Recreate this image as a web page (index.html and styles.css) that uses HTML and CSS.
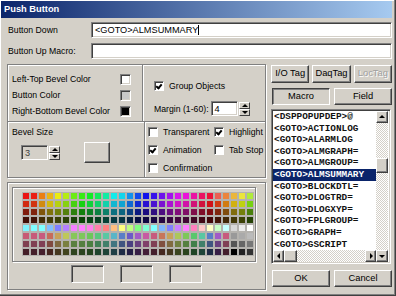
FILE: index.html
```html
<!DOCTYPE html>
<html lang="en">
<head>
    <meta charset="UTF-8">
    <title>Push Button</title>
    <link rel="stylesheet" href="styles.css">
</head>
<body>
    <div class="window">
        <div class="titlebar">Push Button</div>
        <div class="content">
            <div class="field-row">
                <label>Button Down</label>
                <div class="textbox">&lt;GOTO&gt;ALMSUMMARY<span class="caret"></span></div>
            </div>
            <div class="field-row">
                <label>Button Up Macro:</label>
                <div class="textbox"></div>
            </div>

            <div class="main">
                <div class="left">
                    <div class="group props">
                        <div class="props-top">
                            <div class="bevel-colors">
                                <div class="color-row"><span>Left-Top Bevel Color</span><span class="swatch white"></span></div>
                                <div class="color-row"><span>Button Color</span><span class="swatch gray"></span></div>
                                <div class="color-row"><span>Right-Bottom Bevel Color</span><span class="swatch black"></span></div>
                            </div>
                            <div class="grouping">
                                <div class="check-row"><span class="check on"></span>Group Objects</div>
                                <div class="margin-row">
                                    <span>Margin (1-60):</span>
                                    <div class="spinner">
                                        <div class="textbox small">4</div>
                                        <div class="spin"><span class="up"></span><span class="down"></span></div>
                                    </div>
                                </div>
                            </div>
                        </div>
                        <div class="props-bottom">
                            <div class="bevel-size">
                                <div class="caption">Bevel Size</div>
                                <div class="bevel-controls">
                                    <div class="spinner">
                                        <div class="textbox small disabled">3</div>
                                        <div class="spin"><span class="up"></span><span class="down"></span></div>
                                    </div>
                                    <div class="btn preview"></div>
                                </div>
                            </div>
                            <div class="options">
                                <div class="check-row"><span class="check"></span>Transparent</div>
                                <div class="check-row"><span class="check on"></span>Highlight</div>
                                <div class="check-row"><span class="check on"></span>Animation</div>
                                <div class="check-row"><span class="check"></span>Tab Stop</div>
                                <div class="check-row"><span class="check"></span>Confirmation</div>
                            </div>
                        </div>
                    </div>

                    <div class="group palette-group">
                        <div class="palette-panel">
                            <div class="palette" id="palette"></div>
                        </div>
                        <div class="wells">
                            <div class="well"></div>
                            <div class="well"></div>
                            <div class="well"></div>
                        </div>
                    </div>
                </div>

                <div class="right">
                    <div class="tag-buttons">
                        <div class="btn">I/O Tag</div>
                        <div class="btn">DaqTag</div>
                        <div class="btn disabled">LocTag</div>
                    </div>
                    <div class="mode-buttons">
                        <div class="btn pressed">Macro</div>
                        <div class="btn">Field</div>
                    </div>
                    <div class="listbox">
                        <div class="list-main">
                            <ul class="items">
                                <li>&lt;DSPPOPUPDEP&gt;@</li>
                                <li>&lt;GOTO&gt;ACTIONLOG</li>
                                <li>&lt;GOTO&gt;ALARMLOG</li>
                                <li>&lt;GOTO&gt;ALMGRAPH=</li>
                                <li>&lt;GOTO&gt;ALMGROUP=</li>
                                <li class="selected">&lt;GOTO&gt;ALMSUMMARY</li>
                                <li>&lt;GOTO&gt;BLOCKDTL=</li>
                                <li>&lt;GOTO&gt;DLOGTRD=</li>
                                <li>&lt;GOTO&gt;DLOGXYP=</li>
                                <li>&lt;GOTO&gt;FPLGROUP=</li>
                                <li>&lt;GOTO&gt;GRAPH=</li>
                                <li>&lt;GOTO&gt;GSCRIPT</li>
                                <li>&lt;GOTO&gt;HTMLVIEW</li>
                            </ul>
                            <div class="hscroll">
                                <span class="arrow left"></span>
                                <span class="hthumb"></span>
                                <span class="track"></span>
                                <span class="arrow right"></span>
                            </div>
                        </div>
                        <div class="vscroll">
                            <span class="arrow up"></span>
                            <span class="track top"></span>
                            <span class="vthumb"></span>
                            <span class="track"></span>
                            <span class="arrow down"></span>
                        </div>
                    </div>
                    <div class="dialog-buttons">
                        <div class="btn">OK</div>
                        <div class="btn">Cancel</div>
                    </div>
                </div>
            </div>
        </div>
    </div>
    <script src="script.js"></script>
</body>
</html>
```

FILE: styles.css
```css
body {
    margin: 0;
    font-family: 'Liberation Sans', Arial, sans-serif;
    font-size: 8.7px;
    color: #000;
    background: #d4d0c8;
}
.window {
    width: 396px;
    height: 296px;
    box-sizing: border-box;
    background: #d4d0c8;
    border-right: 1px solid #404040;
    border-bottom: 1px solid #404040;
    box-shadow: inset -1px -1px #808080, inset 1px 1px #fff;
    padding: 1px 3px 0 1px;
    overflow: hidden;
}
.titlebar {
    height: 17px;
    line-height: 17px;
    padding-left: 3px;
    color: #fff;
    font-weight: bold;
    font-size: 9.3px;
    background: linear-gradient(90deg, #0a246a, #a6caf0);
}
.content {
    padding: 4px 0 0 4px;
}

/* text fields */
.field-row {
    display: flex;
    align-items: center;
    height: 16px;
    margin-bottom: 5px;
}
.field-row label {
    width: 83px;
    padding-left: 3px;
}
.textbox {
    flex: 1;
    height: 16px;
    box-sizing: border-box;
    background: #fff;
    border: 1px solid;
    border-color: #808080 #fff #fff #808080;
    box-shadow: inset 1px 1px #404040, inset -1px -1px #d4d0c8;
    padding: 2px 3px;
    font-size: 9.2px;
    line-height: 11px;
    white-space: nowrap;
}
.caret {
    display: inline-block;
    width: 1px;
    height: 10px;
    background: #000;
    vertical-align: -2px;
}
.textbox.small {
    flex: none;
    width: 27px;
    height: 15px;
    line-height: 10px;
}
.textbox.disabled {
    background: #d4d0c8;
    color: #404040;
}

/* classic bevels */
.btn {
    box-sizing: border-box;
    background: #d4d0c8;
    border: 1px solid;
    border-color: #fff #404040 #404040 #fff;
    box-shadow: inset -1px -1px #808080;
    text-align: center;
}
.btn.pressed {
    border-color: #404040 #fff #fff #404040;
    box-shadow: inset 1px 1px #808080;
}
.btn.disabled {
    color: #a0a0a0;
    text-shadow: 1px 1px #fff;
}
.group {
    box-sizing: border-box;
    border: 1px solid #808080;
    box-shadow: inset 1px 1px #fff, 1px 1px #fff;
}

.main {
    display: flex;
    gap: 5px;
}
.left {
    width: 259px;
    display: flex;
    flex-direction: column;
    gap: 4px;
    padding-left: 2px;
}
.right {
    width: 121px;
    padding-top: 1px;
}

/* properties group */
.props {
    height: 114px;
}
.props-top {
    display: flex;
    height: 56px;
    border-bottom: 1px solid #808080;
    box-shadow: 0 1px #fff;
}
.bevel-colors {
    width: 130px;
    padding: 6px 0 0 4px;
    border-right: 1px solid #808080;
    box-shadow: 1px 0 #fff;
}
.color-row {
    display: flex;
    justify-content: space-between;
    align-items: center;
    height: 16px;
    padding-right: 11px;
}
.swatch {
    width: 11px;
    height: 11px;
    box-sizing: border-box;
    border: 1px solid;
    border-color: #808080 #fff #fff #808080;
    box-shadow: inset 1px 1px #404040, inset -1px -1px #d4d0c8;
}
.swatch.white { background: #fff; }
.swatch.gray { background: #c8c8c8; }
.swatch.black { background: #000; }
.grouping {
    flex: 1;
    padding: 12px 0 0 11px;
}
.margin-row {
    display: flex;
    align-items: center;
    gap: 2px;
    margin-top: 7px;
}
.check-row {
    display: flex;
    align-items: center;
    gap: 5px;
    height: 17px;
    white-space: nowrap;
}
.check {
    width: 10px;
    height: 10px;
    box-sizing: border-box;
    background: #fff;
    border: 1px solid;
    border-color: #808080 #fff #fff #808080;
    box-shadow: inset 1px 1px #404040;
    position: relative;
}
.check.on::after {
    content: "";
    position: absolute;
    left: 2px;
    top: 1px;
    width: 2px;
    height: 4px;
    border: solid #000;
    border-width: 0 2px 2px 0;
    transform: rotate(40deg);
}

.spinner {
    display: flex;
    align-items: center;
    gap: 1px;
}
.spin {
    display: flex;
    flex-direction: column;
}
.spin span {
    width: 11px;
    height: 7px;
    box-sizing: border-box;
    background: #d4d0c8;
    border: 1px solid;
    border-color: #fff #404040 #404040 #fff;
    position: relative;
}
.spin span::after {
    content: "";
    position: absolute;
    left: 2px;
    border-left: 3px solid transparent;
    border-right: 3px solid transparent;
}
.spin .up::after {
    top: 1px;
    border-bottom: 3px solid #000;
}
.spin .down::after {
    top: 1px;
    border-top: 3px solid #000;
}

.props-bottom {
    display: flex;
    height: 55px;
}
.bevel-size {
    width: 132px;
    padding: 5px 0 0 4px;
    border-right: 1px solid #808080;
    box-shadow: 1px 0 #fff;
}
.bevel-controls {
    display: flex;
    align-items: center;
    gap: 24px;
    padding: 5px 0 0 9px;
}
.preview {
    width: 26px;
    height: 21px;
}
.options {
    flex: 1;
    display: grid;
    grid-template-columns: 66px auto;
    padding: 1px 0 0 3px;
}

/* palette group */
.palette-group {
    height: 108px;
    padding: 4px 9px 0 4px;
}
.palette-panel {
    height: 75px;
    box-sizing: border-box;
    border: 1px solid #808080;
    box-shadow: inset 1px 1px #fff, 1px 1px #fff;
    padding: 5px 0 0 10px;
}
.palette {
    display: grid;
    grid-template-columns: repeat(29, 6px);
    grid-auto-rows: 6px;
    gap: 2px;
}
.palette span {
    outline: 1px solid #b4b2ae;
}
.wells {
    display: flex;
    justify-content: center;
    gap: 16px;
    padding-top: 3px;
    padding-left: 4px;
}
.well {
    width: 33px;
    height: 18px;
    box-sizing: border-box;
    border: 1px solid;
    border-color: #808080 #fff #fff #808080;
    box-shadow: inset 1px 1px #404040, inset -1px -1px #d4d0c8;
}

/* right column */
.tag-buttons {
    display: flex;
    gap: 3px;
    height: 18px;
}
.tag-buttons .btn {
    flex: 1;
    line-height: 15px;
    font-size: 9.3px;
}
.mode-buttons,
.dialog-buttons {
    display: flex;
    gap: 4px;
    margin-top: 5px;
    height: 17px;
}
.mode-buttons .btn,
.dialog-buttons .btn {
    flex: 1;
    line-height: 14px;
    font-size: 9.3px;
}
.mode-buttons .btn:first-child {
    margin-left: 1px;
}
.dialog-buttons {
    margin-top: 6px;
}
.dialog-buttons .btn:first-child {
    margin-left: 1px;
}

.listbox {
    margin-top: 4px;
    height: 155px;
    width: 120px;
    box-sizing: border-box;
    display: flex;
    background: #fff;
    border: 1px solid;
    border-color: #808080 #fff #fff #808080;
    box-shadow: inset 1px 1px #404040, inset -1px -1px #d4d0c8;
    padding: 1px 2px 1px 1px;
}
.list-main {
    flex: 1;
    display: flex;
    flex-direction: column;
    min-width: 0;
}
.items {
    list-style: none;
    margin: 0;
    padding: 0;
    flex: 1;
    overflow: hidden;
    font-family: 'Liberation Mono', 'Courier New', monospace;
    font-weight: bold;
    font-size: 9.4px;
    color: #111;
}
.items li {
    height: 11.6px;
    line-height: 11.6px;
    padding-left: 1px;
    white-space: nowrap;
}
.items li.selected {
    background: #0a246a;
    color: #fff;
}
.hscroll,
.vscroll {
    display: flex;
    background: repeating-conic-gradient(#d4d0c8 0 25%, #fff 0 50%) 0 0 / 2px 2px;
}
.hscroll {
    height: 12px;
}
.vscroll {
    flex-direction: column;
    width: 12px;
}
.track {
    flex: 1;
}
.vscroll .track.top {
    flex: none;
    height: 35px;
}
.arrow,
.hthumb,
.vthumb {
    box-sizing: border-box;
    background: #d4d0c8;
    border: 1px solid;
    border-color: #fff #404040 #404040 #fff;
    box-shadow: inset -1px -1px #808080;
    position: relative;
}
.hscroll .arrow {
    width: 11px;
}
.hthumb {
    width: 13px;
}
.vscroll .arrow {
    height: 12px;
}
.vthumb {
    height: 15px;
}
.arrow::after {
    content: "";
    position: absolute;
}
.arrow.left::after {
    left: 3px;
    top: 2px;
    border-top: 3px solid transparent;
    border-bottom: 3px solid transparent;
    border-right: 3px solid #000;
}
.arrow.right::after {
    left: 4px;
    top: 2px;
    border-top: 3px solid transparent;
    border-bottom: 3px solid transparent;
    border-left: 3px solid #000;
}
.arrow.up::after {
    left: 2px;
    top: 3px;
    border-left: 3px solid transparent;
    border-right: 3px solid transparent;
    border-bottom: 3px solid #000;
}
.arrow.down::after {
    left: 2px;
    top: 4px;
    border-left: 3px solid transparent;
    border-right: 3px solid transparent;
    border-top: 3px solid #000;
}
```

FILE: script.js
```js
// colour palette, 8 rows x 29 cells
const hues = [0, 3, 30, 45, 60, 75, 95, 110, 125, 140, 160, 180, 186, 205, 225, 240, 250, 265, 280, 295, 305, 320, 338, 350, 5, 25, 42, 58, 80];

function hsv(h, s, v) {
    const f = (n) => {
        const k = (n + h / 60) % 6;
        return Math.round(255 * (v - v * s * Math.max(0, Math.min(k, 4 - k, 1))));
    };
    return `rgb(${f(5)}, ${f(3)}, ${f(1)})`;
}

const rows = [];
rows.push(hues.map((h, i) => hsv(h, i === 24 ? 0.65 : i > 24 ? 0.75 : 0.92, 0.92)));
rows.push(hues.map((h) => hsv(h + 8, 0.92, 0.82)));
rows.push(hues.map((h) => hsv(h + 8, 0.9, 0.5)));
rows.push(hues.map((h) => hsv(h + 8, 0.9, 0.26)));

const pastel = [185, 182, 180, 210, 240, 265, 295, 300, 310, 340, 0, 30, 60, 90, 120, 160, 180, 215, 240, 275, 300, 330, 0, 60, 120, 180, 240, 300];
const light = pastel.slice(0, 22).map((h) => hsv(h, 0.5, 1)).concat(
    pastel.slice(22, 26).map((h) => hsv(h, 0.22, 1))
);
rows.push(light.concat(['#d8d8d8', '#ececec', '#ffffff']));
rows.push(pastel.slice(0, 26).map((h) => hsv(h + 160, 0.55, 0.78)).concat(['#999', '#aaa', '#bbb']));
rows.push(pastel.slice(0, 26).map((h) => hsv(h + 160, 0.5, 0.5)).concat(['#555', '#666', '#777']));
rows.push(pastel.slice(0, 26).map((h) => hsv(h + 160, 0.55, 0.27)).concat(['#000', '#222', '#333']));

const palette = document.getElementById('palette');
rows.forEach((row) => {
    row.slice(0, 29).forEach((color) => {
        const cell = document.createElement('span');
        cell.style.background = color;
        palette.appendChild(cell);
    });
});
```
